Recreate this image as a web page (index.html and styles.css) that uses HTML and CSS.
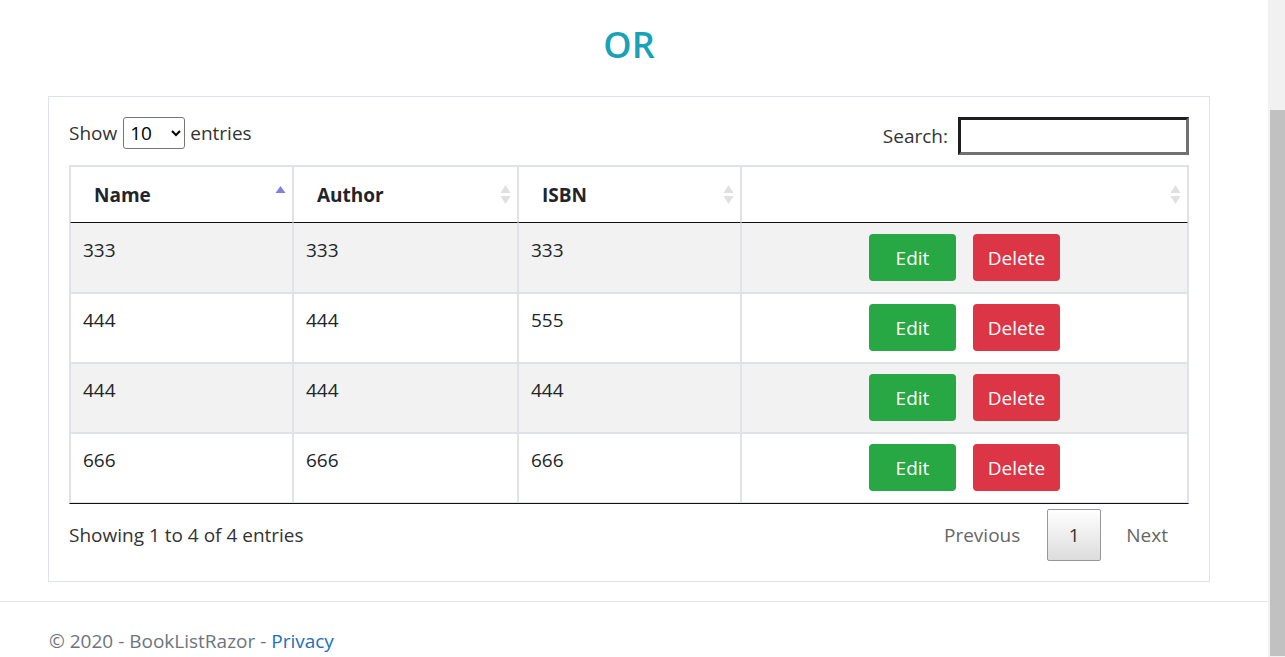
FILE: index.html
```html
<!DOCTYPE html>
<html lang="en">
<head>
<meta charset="utf-8">
<title>BookListRazor</title>
<link rel="stylesheet" href="styles.css">
</head>
<body>
<div class="page">
  <main class="container">
    <h2 class="title">OR</h2>
    <div class="card">
      <div class="dt-top">
        <label class="dt-length">Show
          <select class="dt-select">
            <option>10</option>
            <option>25</option>
            <option>50</option>
            <option>100</option>
          </select>
          entries</label>
        <label class="dt-search">Search:<input type="search" class="dt-input"></label>
      </div>
      <table class="dt-table">
        <colgroup>
          <col class="c1"><col class="c2"><col class="c3"><col class="c4">
        </colgroup>
        <thead>
          <tr>
            <th>Name<svg class="sort" width="11" height="20" viewBox="0 0 11 20"><polygon points="0.5,8 10.5,8 5.5,1" fill="#8080e0"/></svg></th>
            <th>Author<svg class="sort" width="11" height="20" viewBox="0 0 11 20"><polygon points="0.5,8 10.5,8 5.5,0" fill="#e0e0e0"/><polygon points="0.5,11 10.5,11 5.5,19" fill="#e0e0e0"/></svg></th>
            <th>ISBN<svg class="sort" width="11" height="20" viewBox="0 0 11 20"><polygon points="0.5,8 10.5,8 5.5,0" fill="#e0e0e0"/><polygon points="0.5,11 10.5,11 5.5,19" fill="#e0e0e0"/></svg></th>
            <th><svg class="sort" width="11" height="20" viewBox="0 0 11 20"><polygon points="0.5,8 10.5,8 5.5,0" fill="#e0e0e0"/><polygon points="0.5,11 10.5,11 5.5,19" fill="#e0e0e0"/></svg></th>
          </tr>
        </thead>
        <tbody>
          <tr class="odd">
            <td>333</td><td>333</td><td>333</td>
            <td class="actions"><div class="btns"><a class="btn btn-edit">Edit</a><a class="btn btn-del">Delete</a></div></td>
          </tr>
          <tr class="even">
            <td>444</td><td>444</td><td>555</td>
            <td class="actions"><div class="btns"><a class="btn btn-edit">Edit</a><a class="btn btn-del">Delete</a></div></td>
          </tr>
          <tr class="odd">
            <td>444</td><td>444</td><td>444</td>
            <td class="actions"><div class="btns"><a class="btn btn-edit">Edit</a><a class="btn btn-del">Delete</a></div></td>
          </tr>
          <tr class="even">
            <td>666</td><td>666</td><td>666</td>
            <td class="actions"><div class="btns"><a class="btn btn-edit">Edit</a><a class="btn btn-del">Delete</a></div></td>
          </tr>
        </tbody>
      </table>
      <div class="dt-bottom">
        <div class="dt-info">Showing 1 to 4 of 4 entries</div>
        <div class="dt-paginate">
          <a class="pg pg-disabled">Previous</a>
          <a class="pg pg-current">1</a>
          <a class="pg pg-disabled">Next</a>
        </div>
      </div>
    </div>
  </main>
  <footer class="footer">
    <div class="footer-inner">&copy; 2020 - BookListRazor - <a class="footer-link">Privacy</a></div>
  </footer>
</div>
<div class="scrollbar"><div class="scrollbar-thumb"></div></div>
</body>
</html>
```

FILE: styles.css
```css
html, body {
  margin: 0;
  padding: 0;
  overflow: hidden;
  background: #fff;
}
body {
  font-family: "Open Sans", "Noto Sans", "Liberation Sans", sans-serif;
  font-size: 19px;
  line-height: 1.5;
  color: #212529;
}
.page {
  width: 1268px;
}
.container {
  width: 1162px;
  margin-left: 48px;
  box-sizing: border-box;
}
.title {
  margin: 23px 0 30px;
  font-size: 36px;
  line-height: 1.2;
  font-weight: 600;
  color: #17a2b8;
  text-align: center;
}
.card {
  border: 1px solid #dfe2e6;
  padding: 20px;
  color: #333;
}
.dt-top {
  display: flex;
  justify-content: space-between;
  align-items: flex-start;
  height: 48px;
}
.dt-length {
  display: flex;
  align-items: center;
  gap: 5px;
  height: 32px;
}
.dt-select {
  width: 62px;
  height: 32px;
  font-family: inherit;
  font-size: 19px;
  color: #000;
  border: 1px solid #767676;
  border-radius: 3px;
  background: #fff;
  padding: 0 2px;
  margin-left: 1px;
}
.dt-search {
  display: flex;
  align-items: center;
  gap: 10px;
  height: 38px;
}
.dt-input {
  width: 231px;
  height: 38px;
  box-sizing: border-box;
  border-style: solid;
  border-width: 3px;
  border-color: #1e1e1e #717171 #717171 #1e1e1e;
  background: #fff;
  margin: 0;
}
.dt-table {
  width: 1120px;
  table-layout: fixed;
  border-collapse: separate;
  border-spacing: 0;
  border: 1px solid #dfe2e6;
  border-bottom: 1px solid #111;
  color: #212529;
  line-height: 27px;
}
.c1 { width: 223px; }
.c2 { width: 225px; }
.c3 { width: 223px; }
.c4 { width: 447px; }
.dt-table th,
.dt-table td {
  border: 1px solid #dfe2e6;
  vertical-align: top;
  text-align: left;
}
.dt-table th {
  position: relative;
  padding: 15px 30px 13px 23px;
  font-weight: 700;
  border-bottom: 1px solid #111;
  height: 27px;
}
.sort {
  position: absolute;
  right: 6px;
  top: 50%;
  transform: translateY(-50%);
}
.dt-table td {
  padding: 13px 12px 11px;
}
.dt-table td.actions {
  padding-top: 10px;
}
.dt-table tbody tr:first-child td {
  border-top: 0;
  padding-top: 14px;
}
.dt-table tbody tr:first-child td.actions {
  padding-top: 11px;
}
.dt-table tr.odd td {
  background: #f2f2f2;
}
.dt-table tr.even td {
  background: #fff;
}
.btns {
  display: flex;
  justify-content: center;
  gap: 17px;
}
.btn {
  display: flex;
  align-items: center;
  justify-content: center;
  width: 87px;
  height: 47px;
  padding-top: 2px;
  box-sizing: border-box;
  border-radius: 4px;
  color: #fff;
  font-size: 19px;
}
.btn-edit { background: #28a745; }
.btn-del { background: #dc3545; }
.dt-bottom {
  display: flex;
  justify-content: space-between;
  align-items: flex-start;
  padding-top: 4px;
}
.dt-info {
  padding-top: 12px;
  line-height: 30px;
}
.dt-paginate {
  display: flex;
  align-items: center;
  gap: 2px;
  padding-top: 1px;
}
.pg {
  display: flex;
  align-items: center;
  justify-content: center;
  height: 52px;
  box-sizing: border-box;
  padding: 0 21px;
  color: #666;
}
.pg-current {
  width: 54px;
  padding: 0;
  color: #333;
  border: 1px solid #979797;
  border-radius: 2px;
  background: linear-gradient(#fff, #dcdcdc);
  margin: 0 2px 0 4px;
}
.footer {
  margin-top: 19px;
  border-top: 1px solid #e5e5e5;
  color: #6c757d;
}
.footer-inner {
  padding-left: 49px;
  padding-top: 25px;
  line-height: 28px;
}
.footer-link {
  color: #1b6ec2;
}
.scrollbar {
  position: fixed;
  top: 0;
  right: 0;
  width: 17px;
  height: 100%;
  background: #f1f1f1;
}
.scrollbar-thumb {
  position: absolute;
  top: 110px;
  left: 2px;
  right: 0;
  bottom: 1px;
  background: #c1c1c1;
}
```
